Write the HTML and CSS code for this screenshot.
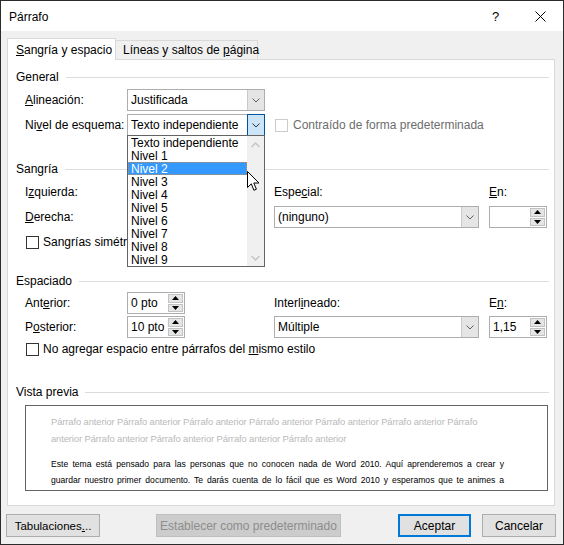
FILE: index.html
```html
<!DOCTYPE html>
<html lang="es">
<head>
<meta charset="utf-8">
<title>Párrafo</title>
<link rel="stylesheet" href="styles.css">
</head>
<body>
<div class="window">
  <div class="titlebar">
    <span class="title">Párrafo</span>
    <span class="tb-btn help">?</span>
    <span class="tb-btn close"><svg width="11" height="11" viewBox="0 0 11 11"><path d="M0.5 0.5L10.5 10.5M10.5 0.5L0.5 10.5" stroke="#000" stroke-width="1" fill="none"/></svg></span>
  </div>

  <div class="tabs">
    <div class="tab active"><span><u>S</u>angría y espacio</span></div>
    <div class="tab"><span>Líneas y saltos de <u>p</u>ágina</span></div>
  </div>

  <div class="panel">
    <div class="group-title">General</div>
    <div class="frow first">
      <span class="lbl"><u>A</u>lineación:</span>
      <div class="combo small">
        <span class="val">Justificada</span>
        <span class="arrow"><svg width="8" height="5" viewBox="0 0 8 5"><path d="M0.5 0.5L4 4L7.5 0.5" stroke="#606060" fill="none"/></svg></span>
      </div>
    </div>
    <div class="frow second">
      <span class="lbl">Ni<u>v</u>el de esquema:</span>
      <div class="combo small open">
        <span class="val">Texto independiente</span>
        <span class="arrow focus"><svg width="8" height="5" viewBox="0 0 8 5"><path d="M0.5 0.5L4 4L7.5 0.5" stroke="#303030" fill="none"/></svg></span>
        <div class="dropdown">
          <ul class="items">
            <li>Texto independiente</li>
            <li>Nivel 1</li>
            <li class="sel">Nivel 2</li>
            <li>Nivel 3</li>
            <li>Nivel 4</li>
            <li>Nivel 5</li>
            <li>Nivel 6</li>
            <li>Nivel 7</li>
            <li>Nivel 8</li>
            <li>Nivel 9</li>
          </ul>
          <div class="vscroll">
            <svg width="9" height="6" viewBox="0 0 9 6"><path d="M0.5 5L4.5 1L8.5 5" stroke="#c4c4c4" stroke-width="1.4" fill="none"/></svg>
            <svg width="9" height="6" viewBox="0 0 9 6"><path d="M0.5 1L4.5 5L8.5 1" stroke="#c4c4c4" stroke-width="1.4" fill="none"/></svg>
          </div>
        </div>
        <svg class="cursor" width="13" height="21" viewBox="0 0 13 21"><path d="M0.5 0.5L0.5 16.5L4.3 12.8L6.9 19.3L9.4 18.2L6.8 12L12 12Z" fill="#fff" stroke="#000" stroke-width="1" stroke-linejoin="round"/></svg>
      </div>
      <span class="check disabled"></span>
      <span class="dis-text">Contraído de forma predeterminada</span>
    </div>

    <div class="group-title sangria-title">Sangría</div>
    <div class="fgrid sangria">
      <span class="lbl r1 c1">I<u>z</u>quierda:</span>
      <div class="spin r1 c2"><span class="v"></span><span class="btns"><span class="sb"><svg width="7" height="4" viewBox="0 0 7 4"><path d="M0 4L3.5 0L7 4Z" fill="#000"/></svg></span><span class="sb"><svg width="7" height="4" viewBox="0 0 7 4"><path d="M0 0L3.5 4L7 0Z" fill="#000"/></svg></span></span></div>
      <span class="lbl r1 c3">Espe<u>c</u>ial:</span>
      <span class="lbl r1 c4"><u>E</u>n:</span>
      <span class="lbl r2 c1"><u>D</u>erecha:</span>
      <div class="spin r2 c2"><span class="v"></span><span class="btns"><span class="sb"><svg width="7" height="4" viewBox="0 0 7 4"><path d="M0 4L3.5 0L7 4Z" fill="#000"/></svg></span><span class="sb"><svg width="7" height="4" viewBox="0 0 7 4"><path d="M0 0L3.5 4L7 0Z" fill="#000"/></svg></span></span></div>
      <div class="combo wide r2 c3">
        <span class="val">(ninguno)</span>
        <span class="arrow"><svg width="8" height="5" viewBox="0 0 8 5"><path d="M0.5 0.5L4 4L7.5 0.5" stroke="#606060" fill="none"/></svg></span>
      </div>
      <div class="spin r2 c4"><span class="v"></span><span class="btns"><span class="sb"><svg width="7" height="4" viewBox="0 0 7 4"><path d="M0 4L3.5 0L7 4Z" fill="#000"/></svg></span><span class="sb"><svg width="7" height="4" viewBox="0 0 7 4"><path d="M0 0L3.5 4L7 0Z" fill="#000"/></svg></span></span></div>
    </div>
    <div class="checkrow sym"><span class="check"></span><span>San<u>g</u>rías simétricas</span></div>

    <div class="group-title espaciado-title">Espaciado</div>
    <div class="fgrid espaciado">
      <span class="lbl r1 c1">Ant<u>e</u>rior:</span>
      <div class="spin r1 c2"><span class="v">0 pto</span><span class="btns"><span class="sb"><svg width="7" height="4" viewBox="0 0 7 4"><path d="M0 4L3.5 0L7 4Z" fill="#000"/></svg></span><span class="sb"><svg width="7" height="4" viewBox="0 0 7 4"><path d="M0 0L3.5 4L7 0Z" fill="#000"/></svg></span></span></div>
      <span class="lbl r1 c3">Interl<u>i</u>neado:</span>
      <span class="lbl r1 c4">E<u>n</u>:</span>
      <span class="lbl r2 c1">P<u>o</u>sterior:</span>
      <div class="spin r2 c2"><span class="v">10 pto</span><span class="btns"><span class="sb"><svg width="7" height="4" viewBox="0 0 7 4"><path d="M0 4L3.5 0L7 4Z" fill="#000"/></svg></span><span class="sb"><svg width="7" height="4" viewBox="0 0 7 4"><path d="M0 0L3.5 4L7 0Z" fill="#000"/></svg></span></span></div>
      <div class="combo wide r2 c3">
        <span class="val">Múltiple</span>
        <span class="arrow"><svg width="8" height="5" viewBox="0 0 8 5"><path d="M0.5 0.5L4 4L7.5 0.5" stroke="#606060" fill="none"/></svg></span>
      </div>
      <div class="spin r2 c4"><span class="v">1,15</span><span class="btns"><span class="sb"><svg width="7" height="4" viewBox="0 0 7 4"><path d="M0 4L3.5 0L7 4Z" fill="#000"/></svg></span><span class="sb"><svg width="7" height="4" viewBox="0 0 7 4"><path d="M0 0L3.5 4L7 0Z" fill="#000"/></svg></span></span></div>
    </div>
    <div class="checkrow nospace"><span class="check"></span><span>No agregar espacio entre párrafos del <u>m</u>ismo estilo</span></div>

    <div class="group-title preview-title">Vista previa</div>
    <div class="preview">
      <div class="prev-line gray">Párrafo anterior Párrafo anterior Párrafo anterior Párrafo anterior Párrafo anterior Párrafo anterior Párrafo</div>
      <div class="prev-line gray">anterior Párrafo anterior Párrafo anterior Párrafo anterior Párrafo anterior</div>
      <div class="prev-line black just first-black">Este tema está pensado para las personas que no conocen nada de Word 2010. Aquí aprenderemos a crear y</div>
      <div class="prev-line black just">guardar nuestro primer documento. Te darás cuenta de lo fácil que es Word 2010 y esperamos que te animes a</div>
      <div class="prev-line black">seguir el curso completo.</div>
    </div>
  </div>

  <div class="footer">
    <button class="btn tabs-btn">Tabulaciones<u>.</u>..</button>
    <button class="btn default-btn" disabled>Establecer como predeterminado</button>
    <button class="btn ok-btn">Aceptar</button>
    <button class="btn cancel-btn">Cancelar</button>
  </div>
</div>
</body>
</html>
```

FILE: styles.css
```css
html, body {
  margin: 0;
  padding: 0;
  background: #ffffff;
}

body {
  font-family: "Liberation Sans", Arial, sans-serif;
  font-size: 12px;
  color: #000;
}

u {
  text-decoration: underline;
  text-underline-offset: 1px;
}

.window {
  width: 564px;
  height: 545px;
  box-sizing: border-box;
  border: 1px solid #2b2b2b;
  background: #f0f0f0;
  display: flex;
  flex-direction: column;
}

/* title bar */
.titlebar {
  height: 30px;
  background: #ffffff;
  display: flex;
  align-items: center;
  flex: none;
}

.title {
  padding-left: 8px;
  font-size: 12px;
  flex: 1;
  padding-top: 1px;
}

.tb-btn {
  width: 45px;
  height: 30px;
  display: flex;
  align-items: center;
  justify-content: center;
}

.help {
  font-size: 13px;
}

/* tabs */
.tabs {
  display: flex;
  align-items: flex-end;
  height: 21px;
  margin-top: 7px;
  padding-left: 6px;
  flex: none;
  position: relative;
  z-index: 2;
}

.tab {
  box-sizing: border-box;
  border: 1px solid #d9d9d9;
  border-bottom: none;
  display: flex;
  align-items: center;
  white-space: nowrap;
}

.tab.active {
  width: 109px;
  height: 22px;
  margin-bottom: -1px;
  background: #ffffff;
  padding-left: 8px;
  position: relative;
  z-index: 3;
}

.tab:not(.active) {
  width: 143px;
  height: 19px;
  margin-left: -1px;
  padding-left: 7px;
  background: #f0f0f0;
}

/* panel */
.panel {
  box-sizing: border-box;
  width: 548px;
  height: 447px;
  margin-left: 6px;
  border: 1px solid #d9d9d9;
  background: #ffffff;
  flex: none;
  position: relative;
}

.group-title {
  display: flex;
  align-items: center;
  height: 16px;
  padding-left: 8px;
  padding-right: 5px;
  margin-top: 9px;
  white-space: nowrap;
}

.group-title::after {
  content: "";
  flex: 1;
  height: 1px;
  background: #dcdcdc;
  margin-left: 7px;
}

.frow {
  display: flex;
  align-items: center;
  height: 22px;
  padding-left: 17px;
}

.frow.first {
  margin-top: 4px;
}

.frow.second {
  margin-top: 3px;
}

.lbl {
  white-space: nowrap;
}

.frow .lbl {
  width: 102px;
  flex: none;
}

/* combo */
.combo {
  box-sizing: border-box;
  height: 22px;
  border: 1px solid #adadad;
  background: #ffffff;
  display: flex;
  align-items: stretch;
  position: relative;
}

.combo.small {
  width: 138px;
}

.combo.wide {
  width: 205px;
}

.combo .val {
  flex: 1;
  padding-left: 3px;
  display: flex;
  align-items: center;
  white-space: nowrap;
  overflow: hidden;
}

.combo .arrow {
  width: 17px;
  box-sizing: border-box;
  background: #e5e5e5;
  border-left: 1px solid #c9c9c9;
  display: flex;
  align-items: center;
  justify-content: center;
}

.combo .arrow.focus {
  width: 18px;
  margin: -1px -1px -1px 0;
  border: 1px solid #005499;
  background: #cce4f7;
}

/* dropdown overlay */
.dropdown {
  position: absolute;
  left: -1px;
  top: 20px;
  width: 138px;
  height: 132px;
  box-sizing: border-box;
  border: 1px solid #646464;
  background: #ffffff;
  display: flex;
  z-index: 5;
}

.items {
  list-style: none;
  margin: 0;
  padding: 0;
  flex: 1;
}

.items li {
  height: 13px;
  line-height: 12px;
  padding-top: 1px;
  padding-left: 3px;
  white-space: nowrap;
  box-sizing: border-box;
}

.items li.sel {
  background: #3399ff;
  color: #ffffff;
  outline: 1px dotted #c98a4a;
  outline-offset: -1px;
}

.vscroll {
  width: 17px;
  background: #f0f0f0;
  display: flex;
  flex-direction: column;
  align-items: center;
  justify-content: space-between;
  padding: 6px 0 5px;
  box-sizing: border-box;
}

.cursor {
  position: absolute;
  left: 119px;
  top: 56px;
  z-index: 6;
}

/* checkboxes */
.check {
  display: inline-block;
  box-sizing: border-box;
  width: 13px;
  height: 13px;
  border: 1px solid #333333;
  background: #ffffff;
  flex: none;
}

.check.disabled {
  border-color: #cccccc;
  margin-left: 10px;
}

.dis-text {
  margin-left: 5px;
  color: #6d6d6d;
  white-space: nowrap;
}

.checkrow {
  display: flex;
  align-items: center;
  height: 16px;
  padding-left: 18px;
  gap: 4px;
  white-space: nowrap;
}

/* grids */
.fgrid {
  display: grid;
  grid-template-columns: 102px 147px 215px 58px;
  padding-left: 17px;
  align-items: center;
}

.sangria {
  grid-template-rows: 20px 22px;
  row-gap: 4px;
  margin-top: 5px;
}

.espaciado {
  grid-template-rows: 22px 22px;
  row-gap: 2px;
  margin-top: 3px;
}

.r1 { grid-row: 1; }
.r2 { grid-row: 2; }
.c1 { grid-column: 1; }
.c2 { grid-column: 2; }
.c3 { grid-column: 3; }
.c4 { grid-column: 4; }

.sangria-title {
  margin-top: 25px;
}

.sym {
  margin-top: 6px;
}

.espaciado-title {
  margin-top: 23px;
}

.nospace {
  margin-top: 3px;
}

.preview-title {
  margin-top: 27px;
}

/* spinner */
.spin {
  box-sizing: border-box;
  width: 58px;
  height: 22px;
  border: 1px solid #adadad;
  background: #ffffff;
  display: flex;
}

.spin .v {
  flex: 1;
  padding-left: 3px;
  display: flex;
  align-items: center;
  white-space: nowrap;
}

.spin .btns {
  width: 15px;
  margin: 1px 1px 1px 0;
  display: flex;
  flex-direction: column;
  gap: 1px;
}

.spin .sb {
  flex: 1;
  box-sizing: border-box;
  background: #e5e5e5;
  border: 1px solid #c2c2c2;
  display: flex;
  align-items: center;
  justify-content: center;
}

/* preview */
.preview {
  box-sizing: border-box;
  width: 523px;
  height: 86px;
  margin-top: 5px;
  margin-left: 17px;
  border: 1px solid #646464;
  background: #ffffff;
  overflow: hidden;
  padding: 7px 0 0 25px;
}

.prev-line {
  white-space: nowrap;
}

.prev-line.gray {
  font-size: 9.4px;
  line-height: 17px;
  color: #b9b9b9;
  letter-spacing: -0.1px;
}

.prev-line.black {
  font-size: 8.6px;
  line-height: 16px;
  color: #000;
  width: 453px;
}

.prev-line.just {
  white-space: normal;
  text-align: justify;
  text-align-last: justify;
}

.first-black {
  margin-top: 9px;
}

/* footer */
.footer {
  display: flex;
  align-items: center;
  margin-top: 8px;
  padding-left: 5px;
  padding-right: 7px;
}

.btn {
  box-sizing: border-box;
  height: 23px;
  font-family: "Liberation Sans", Arial, sans-serif;
  font-size: 12px;
  color: #000;
  background: #e1e1e1;
  border: 1px solid #adadad;
  padding: 0;
  margin: 0;
  white-space: nowrap;
  overflow: visible;
}

.tabs-btn {
  width: 94px;
  font-size: 11.5px;
}

.default-btn {
  width: 185px;
  margin-left: 56px;
  background: #cccccc;
  border-color: #bfbfbf;
  color: #8d8d8d;
}

.ok-btn {
  width: 73px;
  margin-left: auto;
  border: 2px solid #0078d7;
}

.cancel-btn {
  width: 74px;
  margin-left: 11px;
}
```
